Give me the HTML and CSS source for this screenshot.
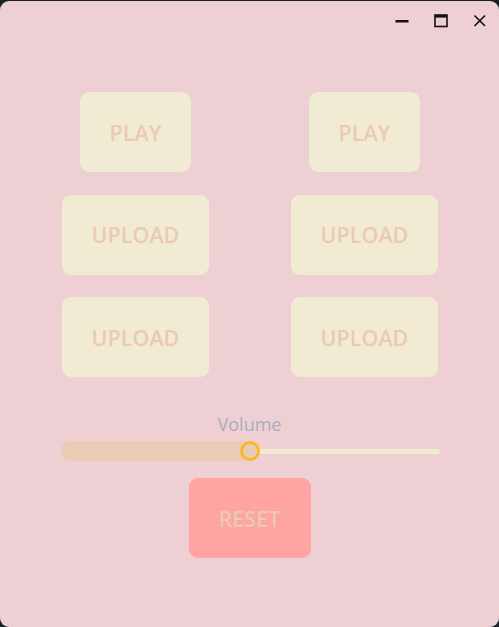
FILE: index.html
```html
<!DOCTYPE html>
<html>
<head>
<meta charset="utf-8">
<link rel="stylesheet" href="styles.css">
</head>
<body>
<div class="window">
  <div class="titlebar">
    <span class="ctl">
      <svg width="14" height="14" viewBox="0 0 14 14"><rect x="0.5" y="6" width="13" height="2.5" fill="#111"/></svg>
    </span>
    <span class="ctl">
      <svg width="14" height="14" viewBox="0 0 14 14"><rect x="1" y="1" width="12" height="11.5" fill="none" stroke="#111" stroke-width="1.6"/><rect x="1" y="1" width="12" height="2.6" fill="#111"/></svg>
    </span>
    <span class="ctl">
      <svg width="14" height="14" viewBox="0 0 14 14"><path d="M1.5 1.5 L12 12 M12 1.5 L1.5 12" stroke="#111" stroke-width="1.6" fill="none"/></svg>
    </span>
  </div>
  <div class="grid">
    <div class="cell"><button class="btn play">PLAY</button></div>
    <div class="cell"><button class="btn play">PLAY</button></div>
    <div class="cell"><button class="btn upload">UPLOAD</button></div>
    <div class="cell"><button class="btn upload">UPLOAD</button></div>
    <div class="cell"><button class="btn upload">UPLOAD</button></div>
    <div class="cell"><button class="btn upload">UPLOAD</button></div>
  </div>
  <div class="volume">
    <div class="vol-label">Volume</div>
    <div class="slider">
      <div class="fill" style="width:189px"></div>
      <div class="rest"></div>
      <div class="thumb" style="left:179px"></div>
    </div>
  </div>
  <div class="reset-row">
    <button class="btn reset">RESET</button>
  </div>
</div>
</body>
</html>
```
FILE: styles.css
```css
html, body {
  margin: 0;
  padding: 0;
  background: #1d2127;
  width: 499px;
  height: 627px;
  overflow: hidden;
}
.window {
  margin-top: 1px;
  height: 626px;
  width: 499px;
  background: #eecfd4;
  border-radius: 9px;
  box-sizing: border-box;
  font-family: "Open Sans", "Noto Sans", sans-serif;
}
.titlebar {
  display: flex;
  justify-content: flex-end;
  height: 40px;
  padding-right: 12px;
  box-sizing: border-box;
  padding-top: 13px;
  gap: 25px;
}
.ctl {
  width: 14px;
  height: 14px;
  display: block;
}
.ctl svg { display: block; }
.grid {
  margin: 51px 20px 0 21px;
  display: grid;
  grid-template-columns: 229px 229px;
  grid-template-rows: 80px 80px 80px;
  row-gap: 22.5px;
}
.cell {
  display: flex;
  justify-content: center;
}
.btn {
  border: none;
  border-radius: 9px;
  background: #f1ebd3;
  color: #ebcab4;
  font-family: "Open Sans", "Noto Sans", sans-serif;
  font-weight: 600;
  font-size: 21.5px;
  height: 80px;
  padding: 0;
  letter-spacing: 0;
}
.play { width: 111px; }
.upload { width: 147px; }
.volume {
  margin-top: 35px;
  display: flex;
  flex-direction: column;
  align-items: center;
}
.vol-label {
  color: #a8aebb;
  font-size: 18px;
  line-height: 24px;
  height: 24px;
}
.slider {
  position: relative;
  width: 379px;
  height: 20px;
  margin-top: 5px;
  margin-left: 1px;
}
.fill {
  position: absolute;
  left: 0;
  top: 0;
  height: 20px;
  background: #eacbb4;
  border-radius: 10px 0 0 10px;
}
.rest {
  position: absolute;
  left: 189px;
  right: 0;
  top: 8px;
  height: 5px;
  background: #f1ebd3;
  border-radius: 3px;
}
.thumb {
  position: absolute;
  top: 0;
  width: 20px;
  height: 20px;
  box-sizing: border-box;
  border-radius: 50%;
  border: 3.5px solid #fbb826;
  background: #eacbb4;
}
.reset-row {
  margin-top: 17px;
  display: flex;
  justify-content: center;
}
.reset {
  width: 122px;
  background: #ffa3a3;
  color: #ebcab4;
}
```
